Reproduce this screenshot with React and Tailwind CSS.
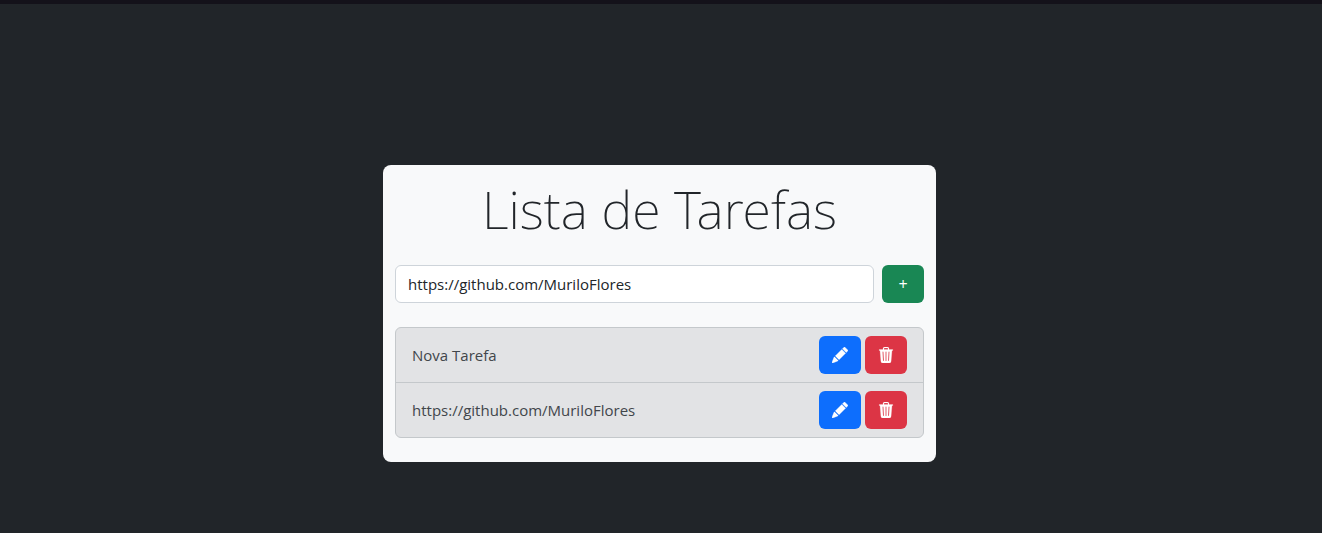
import { useState } from "react";
import { BsPencilFill, BsTrash3Fill } from "react-icons/bs";

const tasks = ["Nova Tarefa", "https://github.com/MuriloFlores"];

const buttonBase =
  "flex h-[38px] w-[42px] shrink-0 items-center justify-center rounded-md text-base text-white";

export default function App() {
  const [draft, setDraft] = useState("https://github.com/MuriloFlores");

  return (
    <div className="min-h-screen border-t-4 border-[#14121a] bg-[#212529] font-['Open_Sans',sans-serif] text-base text-[#212529]">
      <main className="flex justify-center pt-[161px] pr-[3px]">
        <section className="w-full max-w-[553px] rounded-lg bg-[#f8f9fa] px-3 pt-[10px] pb-6">
          <h1 className="mb-[22px] text-center font-['Noto_Sans','Open_Sans',sans-serif] text-[52px] leading-[68px] font-extralight">
            Lista de Tarefas
          </h1>
          <form className="mb-6 flex gap-2" onSubmit={(e) => e.preventDefault()}>
            <input
              type="text"
              aria-label="Tarefa"
              value={draft}
              onChange={(e) => setDraft(e.target.value)}
              className="h-[38px] min-w-0 flex-1 rounded-md border border-[#ced4da] bg-white px-3 text-[15px]"
            />
            <button type="submit" aria-label="Adicionar" className={`${buttonBase} bg-[#198754]`}>
              +
            </button>
          </form>
          <ul className="divide-y divide-[#c4c8cb] rounded-md border border-[#c4c8cb] bg-[#e2e3e5] text-[15px] text-[#41464b]">
            {tasks.map((task) => (
              <li key={task} className="flex items-center gap-1 px-4 py-2">
                <span className="flex-1">{task}</span>
                <button type="button" aria-label="Editar" className={`${buttonBase} bg-[#0d6efd]`}>
                  <BsPencilFill className="stroke-current stroke-[0.4]" />
                </button>
                <button type="button" aria-label="Excluir" className={`${buttonBase} bg-[#dc3545]`}>
                  <BsTrash3Fill className="stroke-current stroke-[0.2]" />
                </button>
              </li>
            ))}
          </ul>
        </section>
      </main>
    </div>
  );
}
